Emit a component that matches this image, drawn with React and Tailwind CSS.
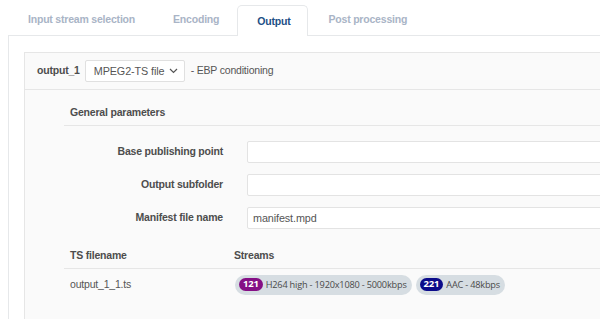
import React from "react";

function Tab({ label, active }) {
  if (active) {
    return (
      <div className="relative -mb-px flex h-[31px] items-center rounded-t-[5px] border border-b-0 border-[#e6e8ea] bg-white pl-[19px] pr-[17px] pt-[1px] text-[10.5px] font-bold tracking-[-0.2px] text-[#1d4f86]">
        {label}
      </div>
    );
  }
  return (
    <div className="flex h-[31px] items-center pl-[20px] pr-[18px] pt-[1px] text-[10.5px] font-bold tracking-[-0.2px] text-[#a9b4c6]">
      {label}
    </div>
  );
}

function Row({ label, value }) {
  return (
    <div className="flex items-center">
      <div className="w-[159px] text-right text-[10.5px] font-bold tracking-[-0.2px] text-[#4d4d4d]">{label}</div>
      <div className="ml-[24px] flex h-[22px] flex-1 items-center rounded-[2px] border border-[#e3e3e3] bg-white px-[5px] text-[10.8px] tracking-[-0.1px] text-[#555]">
        {value}
      </div>
    </div>
  );
}

function Stream({ num, color, text }) {
  return (
    <div className="flex h-[20px] items-center whitespace-nowrap rounded-full bg-[#d6dde2] pl-[4px] pr-[5px] [font-family:'Open_Sans',sans-serif] text-[9.2px] text-[#4a4a4a]">
      <span className={`mr-[3px] flex h-[13px] items-center rounded-full px-[4px] text-[9.5px] font-bold text-white ${color}`}>{num}</span>
      {text}
    </div>
  );
}

export default function App() {
  return (
    <div className="h-[319px] w-[600px] overflow-hidden bg-white [font-family:'Liberation_Sans',Arial,sans-serif]">
      <div className="ml-[8px] flex h-[36px] w-[800px] items-end border-b border-[#e6e8ea]">
        <Tab label="Input stream selection" />
        <Tab label="Encoding" />
        <Tab label="Output" active />
        <Tab label="Post processing" />
      </div>
      <div className="ml-[8px] w-[800px] border-l border-[#e6e8ea] pl-[15px] pt-[16px]">
        <div className="border border-[#e6e6e6] bg-[#fafafa] pb-[40px]">
          <div className="flex h-[37px] items-center whitespace-nowrap border-b border-[#e6e6e6] pl-[12px] text-[10.5px] tracking-[-0.2px] text-[#555]">
            <span className="font-bold text-[#4d4d4d]">output_1</span>
            <div className="ml-[5px] flex h-[22px] w-[100px] items-center justify-between rounded-[2px] border border-[#e0e0e0] bg-white pl-[8px] pr-[6px] text-[10.8px] tracking-[-0.1px] text-[#555]">
              <span>MPEG2-TS file</span>
              <svg width="9" height="6" viewBox="0 0 9 6" fill="none" stroke="#555" strokeWidth="1.2">
                <path d="M1 1l3.5 3.5L8 1" />
              </svg>
            </div>
            <span className="ml-[6px]">- EBP conditioning</span>
          </div>
          <div className="ml-[39px] pt-[15px]">
            <div className="border-b border-[#e6e6e6] px-[6px] pb-[4px] text-[10.5px] font-bold tracking-[-0.2px] text-[#4d4d4d]">General parameters</div>
            <div className="mt-[15px] flex flex-col gap-[11px]">
              <Row label="Base publishing point" value="" />
              <Row label="Output subfolder" value="" />
              <Row label="Manifest file name" value="manifest.mpd" />
            </div>
            <div className="mt-[19px] flex border-b border-[#e6e6e6] pb-[4px] text-[10.5px] font-bold tracking-[-0.2px] text-[#4d4d4d]">
              <div className="w-[170px] px-[6px]">TS filename</div>
              <div>Streams</div>
            </div>
            <div className="mt-[6px] flex items-center text-[10.5px] tracking-[-0.2px] text-[#555]">
              <div className="w-[171px] px-[6px]">output_1_1.ts</div>
              <div className="flex gap-[4px]">
                <Stream num="121" color="bg-[#850f85]" text="H264 high - 1920x1080 - 5000kbps" />
                <Stream num="221" color="bg-[#0b0b8a]" text="AAC - 48kbps" />
              </div>
            </div>
          </div>
        </div>
      </div>
    </div>
  );
}
